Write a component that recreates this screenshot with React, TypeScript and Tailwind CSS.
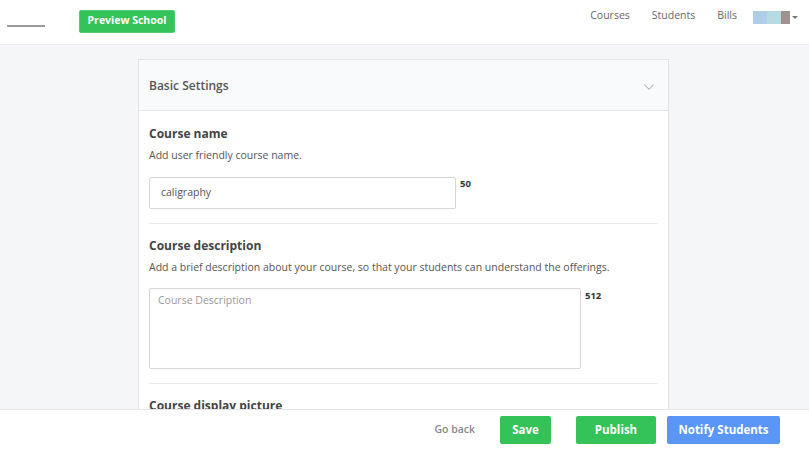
import { ChevronDown } from "lucide-react";

function Divider() {
  return <div className="h-px bg-[#ebebeb]" />;
}

export default function App() {
  return (
    <div className="h-screen flex flex-col bg-[#f5f6f8] text-[#555] font-['Open_Sans',sans-serif] overflow-hidden">
      {/* top bar */}
      <header className="h-[45px] shrink-0 bg-white border-b border-[#ececef] flex items-center">
        <div className="w-[38px] h-[2px] bg-[#9a9a9a] ml-[7px] mt-[8px]" />
        <button className="ml-[34px] mt-[-2px] h-[23px] w-[96px] rounded-[2px] bg-[#33c359] border border-[#4fd070] text-white text-[10.5px] font-bold">
          Preview School
        </button>
        <nav className="ml-auto flex items-center text-[10.5px] text-[#666] mt-[-12px]">
          <span className="mr-[22px]">Courses</span>
          <span className="mr-[22px]">Students</span>
          <span className="mr-[16px]">Bills</span>
          <div className="flex items-center mr-[11px] mt-[2px]">
            <div className="flex h-[13px]">
              <div className="w-[14px] bg-[#aecde6]" />
              <div className="w-[14px] bg-[#b7dbe3]" />
              <div className="w-[9px] bg-[#a0928f]" />
            </div>
            <div className="ml-[2px] w-0 h-0 border-l-[3px] border-r-[3px] border-t-[3px] border-l-transparent border-r-transparent border-t-[#777]" />
          </div>
        </nav>
      </header>

      {/* content */}
      <main className="flex-1 overflow-hidden pt-[14px]">
        <div className="ml-[138px] w-[531px] bg-white border border-[#e2e3e6]">
          <div className="h-[51px] bg-[#f9fafb] border-b border-[#e4e5e8] flex items-center justify-between px-[10px]">
            <span className="text-[12px] font-semibold text-[#555] mt-[1px]">Basic Settings</span>
            <ChevronDown className="w-[18px] h-[18px] text-[#aab0b8] mt-[3px]" strokeWidth={1.4} />
          </div>

          <div className="px-[10px] pt-[14px]">
            <h3 className="text-[12px] font-bold text-[#444] leading-[18px]">Course name</h3>
            <p className="mt-[4px] text-[10.5px] leading-[16px] text-[#555]">Add user friendly course name.</p>
            <div className="mt-[14px] flex items-start">
              <div className="w-[307px] h-[32px] border border-[#d6d6d6] rounded-[2px] flex items-center px-[11px] text-[10.5px] text-[#555]">
                caligraphy
              </div>
              <span className="ml-[4px] text-[9.5px] font-bold text-[#333] leading-[14px]">50</span>
            </div>
            <div className="mt-[14px]">
              <Divider />
            </div>

            <h3 className="mt-[13px] text-[12px] font-bold text-[#444] leading-[18px]">Course description</h3>
            <p className="mt-[4px] text-[10.5px] leading-[16px] text-[#555]">
              Add a brief description about your course, so that your students can understand the offerings.
            </p>
            <div className="mt-[13px] flex items-start">
              <div className="w-[432px] h-[81px] border border-[#d6d6d6] rounded-[2px] px-[8px] pt-[4px] text-[10.5px] text-[#999]">
                Course Description
              </div>
              <span className="ml-[4px] mt-[1px] text-[9.5px] font-bold text-[#333] leading-[14px]">512</span>
            </div>
            <div className="mt-[14px]">
              <Divider />
            </div>

            <h3 className="mt-[13px] text-[12px] font-bold text-[#444] leading-[18px]">Course display picture</h3>
          </div>
        </div>
      </main>

      {/* footer actions */}
      <footer className="h-[40px] shrink-0 bg-white border-t border-[#e4e5e8] flex items-center justify-end pr-[29px]">
        <span className="text-[10.5px] font-semibold text-[#888] mr-[25px]">Go back</span>
        <button className="h-[28px] w-[51px] rounded-[2px] bg-[#33c359] text-white text-[11.5px] font-bold mr-[25px]">
          Save
        </button>
        <button className="h-[28px] w-[80px] rounded-[2px] bg-[#33c359] text-white text-[11.5px] font-bold mr-[11px]">
          Publish
        </button>
        <button className="h-[28px] w-[113px] rounded-[2px] bg-[#5a96f5] text-white text-[11.5px] font-bold">
          Notify Students
        </button>
      </footer>
    </div>
  );
}
